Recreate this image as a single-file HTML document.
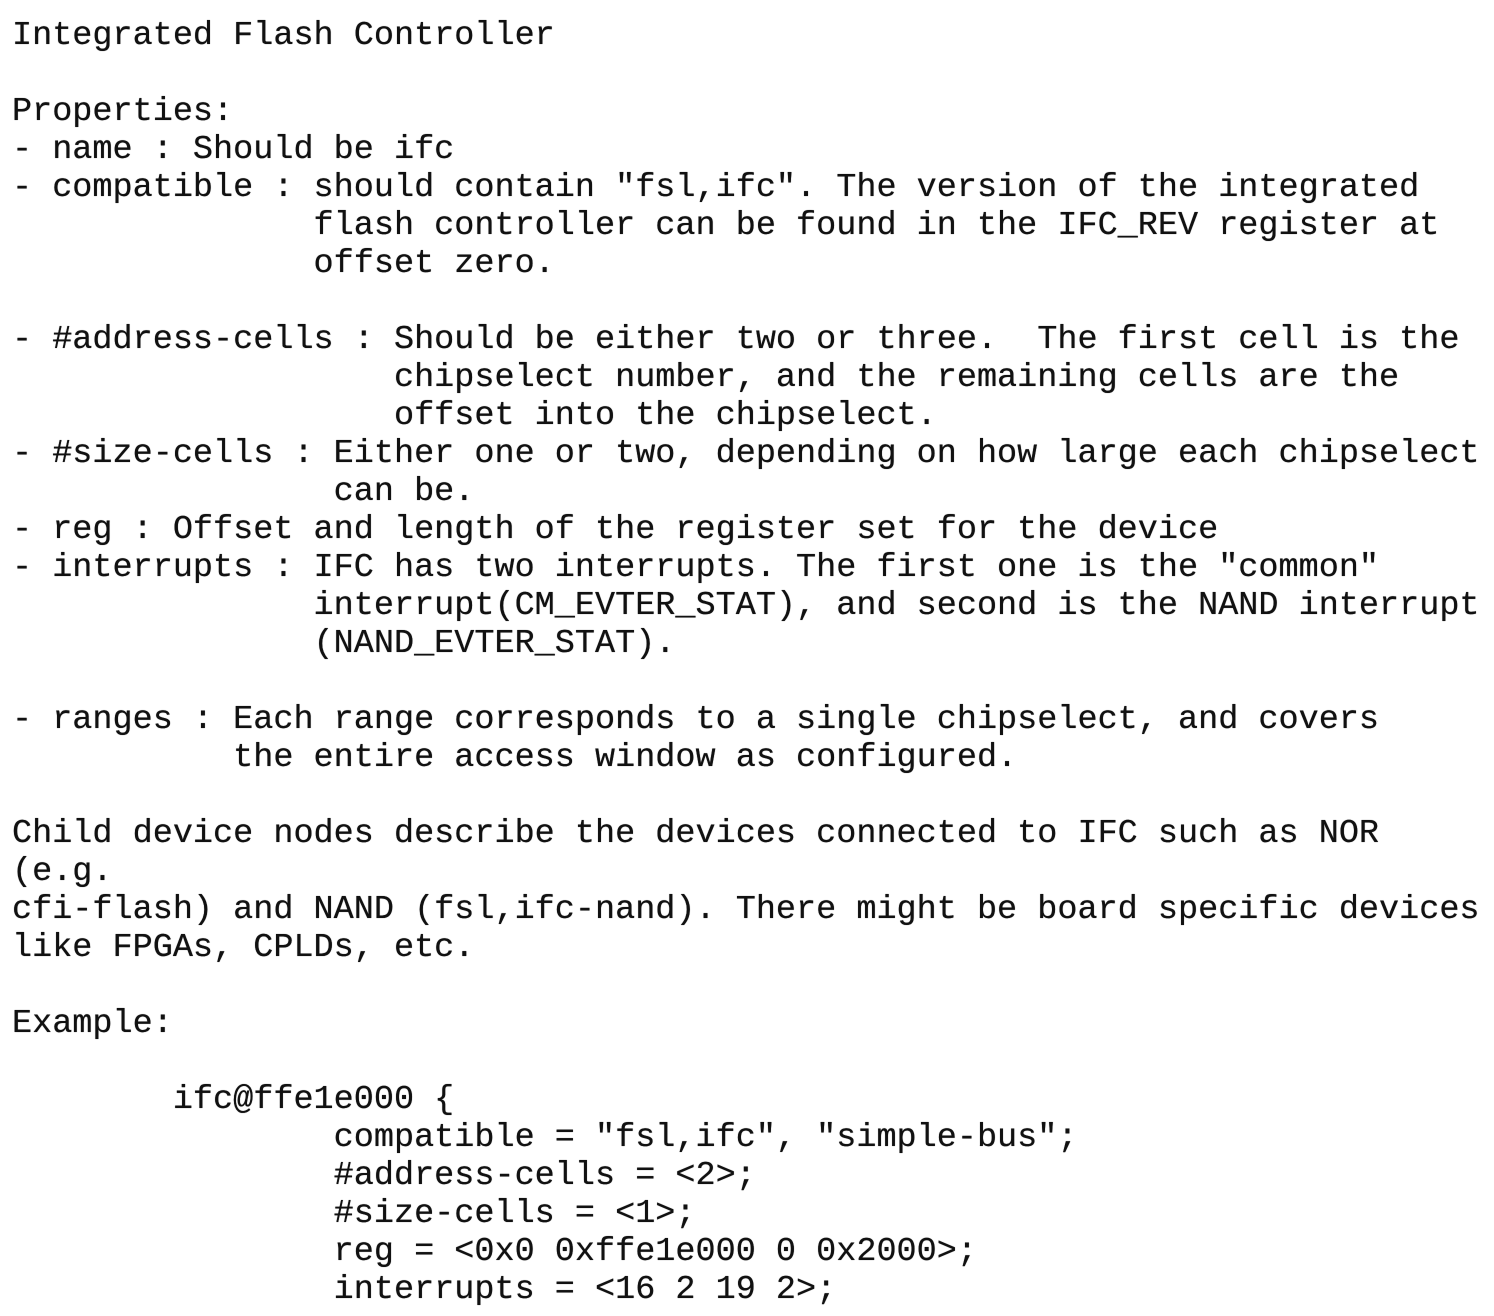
<!DOCTYPE html>
<html><head><meta charset="utf-8">
<style>
html,body{margin:0;padding:0;background:#fff;width:1494px;height:1316px;overflow:hidden}
pre{margin:0;position:absolute;left:12px;top:17px;font-family:"Liberation Mono","Courier New",monospace;font-size:33.5px;line-height:38px;color:#111;text-shadow:0 0 0.6px #111}
</style></head><body>
<pre>Integrated Flash Controller

Properties:
- name : Should be ifc
- compatible : should contain "fsl,ifc". The version of the integrated
               flash controller can be found in the IFC_REV register at
               offset zero.

- #address-cells : Should be either two or three.  The first cell is the
                   chipselect number, and the remaining cells are the
                   offset into the chipselect.
- #size-cells : Either one or two, depending on how large each chipselect
                can be.
- reg : Offset and length of the register set for the device
- interrupts : IFC has two interrupts. The first one is the "common"
               interrupt(CM_EVTER_STAT), and second is the NAND interrupt
               (NAND_EVTER_STAT).

- ranges : Each range corresponds to a single chipselect, and covers
           the entire access window as configured.

Child device nodes describe the devices connected to IFC such as NOR
(e.g.
cfi-flash) and NAND (fsl,ifc-nand). There might be board specific devices
like FPGAs, CPLDs, etc.

Example:

        ifc@ffe1e000 {
                compatible = "fsl,ifc", "simple-bus";
                #address-cells = &lt;2&gt;;
                #size-cells = &lt;1&gt;;
                reg = &lt;0x0 0xffe1e000 0 0x2000&gt;;
                interrupts = &lt;16 2 19 2&gt;;</pre>
</body></html>
